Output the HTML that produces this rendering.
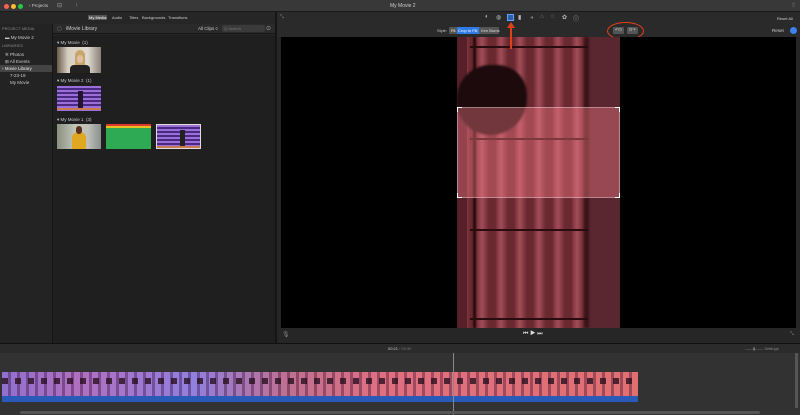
<!DOCTYPE html>
<html><head><style>
*{margin:0;padding:0;box-sizing:border-box}
body{width:800px;height:415px;background:#262626;font-family:"Liberation Sans",sans-serif;color:#ccc;position:relative;overflow:hidden;font-size:5px}
.a{position:absolute}
.t{position:absolute;white-space:nowrap}
.i{position:absolute;font-size:6px;color:#bbb;top:14px}
</style></head><body>
<div class="a" style="left:0;top:0;width:800px;height:12px;background:#383838;border-bottom:1px solid #1a1a1a"></div>
<div class="a" style="left:4px;top:4px;width:5px;height:5px;border-radius:50%;background:#fe5f57"></div>
<div class="a" style="left:11px;top:4px;width:5px;height:5px;border-radius:50%;background:#febc2e"></div>
<div class="a" style="left:18px;top:4px;width:5px;height:5px;border-radius:50%;background:#28c840"></div>
<div class="t" style="left:29px;top:3px;font-size:4.5px">‹ Projects</div>
<div class="t" style="left:57px;top:2px;font-size:6px;color:#999">⊟</div>
<div class="t" style="left:75px;top:2px;font-size:6px;color:#999">↓</div>
<div class="t" style="left:390px;top:3px;font-size:5px">My Movie 2</div>
<div class="t" style="left:791px;top:2px;font-size:6px;color:#777">⇧</div>
<!-- tabs -->
<div class="t" style="left:88px;top:15px;font-size:4px;background:#555;padding:0 1px;color:#fff">My Media</div>
<div class="t" style="left:112px;top:15px;font-size:4px">Audio</div>
<div class="t" style="left:129px;top:15px;font-size:4px">Titles</div>
<div class="t" style="left:142px;top:15px;font-size:4px">Backgrounds</div>
<div class="t" style="left:168px;top:15px;font-size:4px">Transitions</div>
<!-- sidebar -->
<div class="a" style="left:0;top:24px;width:53px;height:319px;background:#232323;border-right:1px solid #151515"></div>
<div class="t" style="left:2px;top:26px;font-size:4px;color:#888">PROJECT MEDIA</div>
<div class="t" style="left:5px;top:35px;font-size:4.5px">▬ My Movie 2</div>
<div class="t" style="left:2px;top:43px;font-size:4px;color:#888">LIBRARIES</div>
<div class="t" style="left:5px;top:52px;font-size:4.5px">✲ Photos</div>
<div class="t" style="left:5px;top:59px;font-size:4.5px">⊞ All Events</div>
<div class="a" style="left:0;top:65px;width:52px;height:7px;background:#444"></div>
<div class="t" style="left:2px;top:66px;font-size:4.5px;color:#eee">› Movie Library</div>
<div class="t" style="left:10px;top:73px;font-size:4.5px">7-23-19</div>
<div class="t" style="left:10px;top:80px;font-size:4.5px">My Movie</div>
<!-- browser -->
<div class="a" style="left:53px;top:24px;width:222px;height:10px;background:#2a2a2a;border-bottom:1px solid #151515"></div>
<div class="t" style="left:57px;top:26px;font-size:5px;color:#888">▢</div>
<div class="t" style="left:66px;top:26px;font-size:5px">iMovie Library</div>
<div class="t" style="left:198px;top:26px;font-size:4.5px">All Clips ◊</div>
<div class="a" style="left:222px;top:25px;width:43px;height:7px;background:#3a3a3a;border-radius:2px"></div>
<div class="t" style="left:224px;top:26px;font-size:4px;color:#777">Q Search</div>
<div class="t" style="left:266px;top:25px;font-size:6px;color:#aaa">⊙</div>
<div class="a" style="left:53px;top:35px;width:222px;height:308px;background:#1f1f1f"></div>
<div class="t" style="left:57px;top:40px;font-size:4.5px">▾ My Movie &nbsp;(1)</div>
<div class="a" style="left:57px;top:47px;width:44px;height:26px;background:linear-gradient(90deg,#6a5a4a,#d8cfc4 25%,#e0dad0 70%,#8a8078)"></div>
<div class="a" style="left:75px;top:50px;width:10px;height:23px;background:#c8a56a;border-radius:5px 5px 0 0"></div>
<div class="a" style="left:70px;top:65px;width:20px;height:8px;background:#222;border-radius:4px 4px 0 0"></div>
<div class="a" style="left:77px;top:55px;width:6px;height:8px;background:#e0c0a0;border-radius:3px"></div>
<div class="t" style="left:57px;top:78px;font-size:4.5px">▾ My Movie 2 &nbsp;(1)</div>
<div class="a" style="left:57px;top:86px;width:44px;height:25px;background:repeating-linear-gradient(180deg,#9b6fd8 0 2px,#4a2a80 2px 4px)"></div>
<div class="a" style="left:78px;top:91px;width:5px;height:17px;background:#221530"></div>
<div class="a" style="left:57px;top:108px;width:44px;height:2px;background:#c87a50"></div>
<div class="t" style="left:57px;top:117px;font-size:4.5px">▾ My Movie 1 &nbsp;(3)</div>
<div class="a" style="left:57px;top:124px;width:44px;height:25px;background:linear-gradient(90deg,#8a9080,#c0c4b8 40%,#c0c0b8 70%,#8a9090)"></div>
<div class="a" style="left:72px;top:132px;width:14px;height:17px;background:#e0a820;border-radius:6px 6px 0 0"></div>
<div class="a" style="left:76px;top:126px;width:6px;height:8px;background:#5a3020;border-radius:3px"></div>
<div class="a" style="left:106px;top:124px;width:45px;height:25px;background:#2eaa55;border-top:4px solid #e8c020"></div>
<div class="a" style="left:106px;top:124px;width:45px;height:2px;background:#e03a30"></div>
<div class="a" style="left:156px;top:124px;width:45px;height:25px;background:repeating-linear-gradient(180deg,#9b6fd8 0 2px,#4a2a80 2px 4px);border:1px solid #ddd"></div>
<div class="a" style="left:180px;top:130px;width:5px;height:18px;background:#222"></div>
<div class="a" style="left:157px;top:146px;width:43px;height:2px;background:#c87a50"></div>
<div class="a" style="left:275px;top:12px;width:2px;height:331px;background:#151515"></div>
<!-- viewer toolbar -->
<div class="a" style="left:277px;top:12px;width:523px;height:25px;background:#2a2a2a"></div>
<div class="t" style="left:280px;top:14px;font-size:5px;color:#888">⤡</div>
<div class="i" style="left:485px">◐</div>
<div class="i" style="left:496px">◍</div>
<div class="a" style="left:507px;top:14px;width:7px;height:7px;background:#2c5fa8;border:1px solid #6aa0ff"></div>
<div class="i" style="left:518px">▮</div>
<div class="i" style="left:530px;color:#777">◂</div>
<div class="i" style="left:540px;color:#777">⌂</div>
<div class="i" style="left:551px">◌</div>
<div class="i" style="left:562px">✿</div>
<div class="i" style="left:573px">ⓘ</div>
<div class="t" style="left:777px;top:16px;font-size:4px">Reset All</div>
<div class="t" style="left:437px;top:28px;font-size:4px">Style:</div>
<div class="a" style="left:449px;top:27px;width:50px;height:7px;background:#555;border-radius:1px"></div>
<div class="t" style="left:451px;top:28px;font-size:4px;color:#fff">Fit</div>
<div class="a" style="left:457px;top:27px;width:22px;height:7px;background:#2f7be8"></div>
<div class="t" style="left:458px;top:28px;font-size:4px;color:#fff">Crop to Fill</div>
<div class="t" style="left:481px;top:28px;font-size:4px;color:#ddd">Ken Burns</div>
<div class="a" style="left:613px;top:27px;width:11px;height:7px;background:#555;border-radius:1px"></div>
<div class="a" style="left:627px;top:27px;width:11px;height:7px;background:#555;border-radius:1px"></div>
<div class="t" style="left:615px;top:27px;font-size:4px">↶⊡</div>
<div class="t" style="left:629px;top:27px;font-size:4px">⊡↷</div>
<div class="a" style="left:607px;top:22px;width:37px;height:18px;border:1.5px solid #e0401a;border-radius:50%"></div>
<div class="t" style="left:772px;top:28px;font-size:4.5px">Reset</div>
<div class="a" style="left:790px;top:27px;width:7px;height:7px;border-radius:50%;background:#3b82f0"></div>
<!-- video -->
<div class="a" style="left:281px;top:37px;width:515px;height:291px;background:#000"></div>
<div class="a" style="left:457px;top:37px;width:163px;height:291px;background:repeating-linear-gradient(90deg,#6a2830 0 3px,#8a3c46 6px,#a04e58 9px,#8a3c46 12px,#6a2830 16px,#6a2830 19px);background-position:-3px 0"></div>
<div class="a" style="left:588px;top:37px;width:32px;height:291px;background:#5a2630"></div>
<div class="a" style="left:584px;top:37px;width:5px;height:291px;background:#3a1418;filter:blur(1px)"></div>
<div class="a" style="left:457px;top:37px;width:10px;height:291px;background:#55202a"></div>
<div class="a" style="left:473px;top:37px;width:3px;height:291px;background:#2a0c10;filter:blur(.5px)"></div>
<div class="a" style="left:470px;top:46px;width:118px;height:2px;background:#2a0c10"></div>
<div class="a" style="left:470px;top:138px;width:118px;height:2px;background:#2a0c10"></div>
<div class="a" style="left:470px;top:229px;width:118px;height:2px;background:#2a0c10"></div>
<div class="a" style="left:470px;top:318px;width:118px;height:2px;background:#2a0c10"></div>
<div class="a" style="left:457px;top:65px;width:70px;height:70px;background:#1c0a0c;border-radius:50% 45% 55% 50%;filter:blur(1px)"></div>
<div class="a" style="left:457px;top:107px;width:163px;height:91px;background:rgba(255,130,140,0.38);border:1px solid rgba(255,255,255,.35)"></div>
<div class="a" style="left:457px;top:107px;width:5px;height:5px;border-left:1.5px solid #fff;border-top:1.5px solid #fff"></div>
<div class="a" style="left:615px;top:107px;width:5px;height:5px;border-right:1.5px solid #fff;border-top:1.5px solid #fff"></div>
<div class="a" style="left:457px;top:193px;width:5px;height:5px;border-left:1.5px solid #fff;border-bottom:1.5px solid #fff"></div>
<div class="a" style="left:615px;top:193px;width:5px;height:5px;border-right:1.5px solid #fff;border-bottom:1.5px solid #fff"></div>
<!-- orange arrow -->
<div class="a" style="left:510px;top:26px;width:2px;height:23px;background:#e0401a"></div>
<div class="a" style="left:507px;top:22px;width:0;height:0;border-left:4px solid transparent;border-right:4px solid transparent;border-bottom:6px solid #e0401a"></div>
<!-- controls -->
<div class="a" style="left:277px;top:328px;width:523px;height:15px;background:#262626"></div>
<div class="t" style="left:282px;top:331px;font-size:6px;color:#888">🎙</div>
<div class="t" style="left:523px;top:331px;font-size:6px;color:#ddd">⏮ ▶ ⏭</div>
<div class="t" style="left:790px;top:331px;font-size:5px;color:#888">⤡</div>
<!-- timeline -->
<div class="a" style="left:0;top:343px;width:800px;height:10px;background:#2b2b2b;border-top:1px solid #111"></div>
<div class="t" style="left:388px;top:346px;font-size:4px">00:21 <span style="color:#777">/ 00:30</span></div>
<div class="t" style="left:745px;top:346px;font-size:4px;color:#888">——▮—— <span>Settings</span></div>
<div class="a" style="left:0;top:353px;width:800px;height:62px;background:#323232"></div>
<div class="a" style="left:2px;top:372px;width:636px;height:24px;background:linear-gradient(90deg,#9070d0 0%,#b070c0 12%,#9080e0 30%,#c07090 45%,#e07080 60%,#e07070 100%)"></div>
<div class="a" style="left:2px;top:372px;width:636px;height:24px;background:repeating-linear-gradient(90deg,rgba(0,0,0,0) 0 6px,rgba(40,0,40,.35) 6px 9px)"></div>
<div class="a" style="left:2px;top:378px;width:636px;height:6px;background:repeating-linear-gradient(90deg,#2a1020 0 6px,transparent 6px 13px);opacity:.8"></div>
<div class="a" style="left:2px;top:396px;width:636px;height:6px;background:#2a5ab8"></div>
<div class="a" style="left:453px;top:353px;width:1px;height:62px;background:#888"></div>
<div class="a" style="left:20px;top:411px;width:740px;height:3px;background:#555;border-radius:2px"></div>
<div class="a" style="left:795px;top:353px;width:3px;height:55px;background:#555"></div>
</body></html>
